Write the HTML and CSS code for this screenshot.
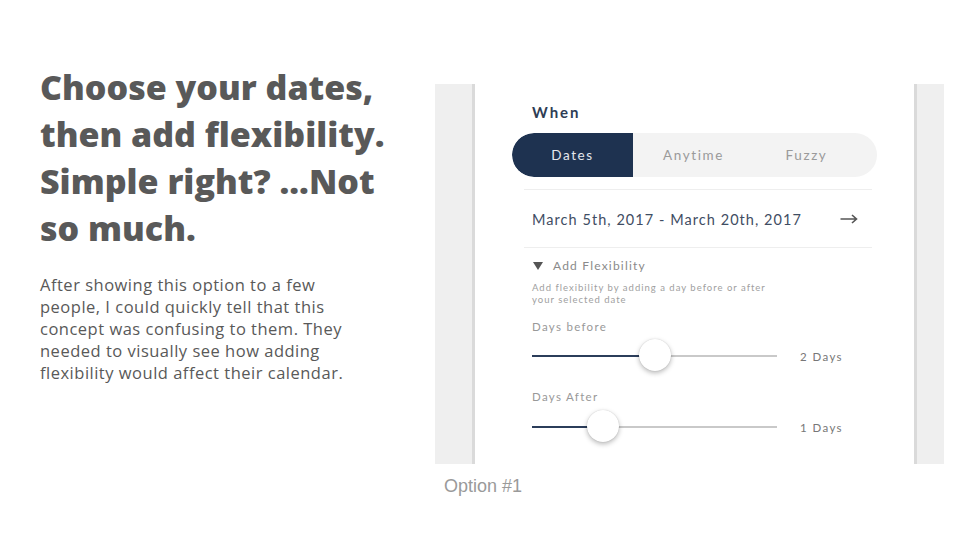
FILE: index.html
```html
<!DOCTYPE html>
<html>
<head>
<meta charset="utf-8">
<link rel="stylesheet" href="styles.css">
</head>
<body>
<div class="slide">
  <div class="left">
    <h1 class="title">Choose your dates,<br>then add flexibility.<br>Simple right? ...Not<br>so much.</h1>
    <p class="body">After showing this option to a few<br>people, I could quickly tell that this<br>concept was confusing to them. They<br>needed to visually see how adding<br>flexibility would affect their calendar.</p>
  </div>
  <div class="right">
    <div class="shot">
      <div class="strip strip-left"></div>
      <div class="screen">
        <div class="content">
          <div class="when">When</div>
          <div class="toggle">
            <div class="seg seg-active">Dates</div>
            <div class="seg">Anytime</div>
            <div class="seg seg-last">Fuzzy</div>
          </div>
          <div class="divider"></div>
          <div class="daterow">
            <span class="dates">March 5th, 2017 - March 20th, 2017</span>
            <svg class="arrow" width="18" height="10" viewBox="0 0 18 10"><path d="M0.5 5H16.5M12 1L16.5 5L12 9" fill="none" stroke="#555" stroke-width="1.6"/></svg>
          </div>
          <div class="divider divider2"></div>
          <div class="flexhead"><svg class="tri" width="10" height="8" viewBox="0 0 10 8"><path d="M0 0H10L5 8Z" fill="#555"/></svg>Add Flexibility</div>
          <div class="hint">Add flexibility by adding a day before or after<br>your selected date</div>
          <div class="label label1">Days before</div>
          <div class="sliderrow">
            <div class="track"><div class="fill" style="width:50%"></div><div class="thumb" style="left:50%"></div></div>
            <span class="val">2 Days</span>
          </div>
          <div class="label label2">Days After</div>
          <div class="sliderrow">
            <div class="track"><div class="fill" style="width:29%"></div><div class="thumb" style="left:29%"></div></div>
            <span class="val">1 Days</span>
          </div>
        </div>
      </div>
      <div class="strip strip-right"></div>
    </div>
    <div class="caption">Option #1</div>
  </div>
</div>
</body>
</html>
```

FILE: styles.css
```css
html, body {
  margin: 0;
  padding: 0;
  background: #ffffff;
}
.slide {
  width: 960px;
  height: 540px;
  display: flex;
  overflow: hidden;
}
.left {
  width: 395px;
  padding-left: 40px;
  padding-top: 64px;
  box-sizing: border-box;
  flex-shrink: 0;
}
.title {
  margin: 0;
  font-family: "Open Sans", sans-serif;
  font-weight: 800;
  font-size: 34px;
  line-height: 47px;
  color: #595959;
  white-space: nowrap;
}
.body {
  margin: 22px 0 0 0;
  font-family: "Open Sans", sans-serif;
  font-size: 16.5px;
  line-height: 22px;
  letter-spacing: 0.5px;
  color: #595959;
  white-space: nowrap;
}
.right {
  padding-left: 40px;
  padding-top: 84px;
}
.shot {
  width: 509px;
  height: 380px;
  display: flex;
  background: #efefef;
}
.strip {
  background: #efefef;
}
.strip-left {
  width: 37px;
  border-right: 3px solid #dadada;
}
.strip-right {
  width: 27px;
  border-left: 3px solid #dadada;
}
.screen {
  flex: 1;
  background: #ffffff;
  overflow: hidden;
}
.content {
  margin-left: 37px;
  width: 365px;
  padding-top: 18px;
  font-family: "Lato", sans-serif;
}
.when {
  padding-left: 20px;
  font-size: 15px;
  line-height: 20px;
  font-weight: 700;
  letter-spacing: 2px;
  color: #2e3d55;
}
.toggle {
  margin-top: 11px;
  height: 44px;
  display: flex;
  background: #f3f3f3;
  border-radius: 22px;
  overflow: hidden;
}
.seg {
  width: 121px;
  display: flex;
  align-items: center;
  justify-content: center;
  font-size: 13.5px;
  letter-spacing: 1.6px;
  color: #9a9a9a;
}
.seg-active {
  background: #1e3250;
  color: #e4e8ee;
  border-radius: 22px 0 0 22px;
}
.seg-last {
  width: 123px;
  padding-right: 18px;
  box-sizing: border-box;
}
.divider {
  margin: 12px 5px 0 12px;
  height: 1px;
  background: #eeeeee;
}
.daterow {
  margin-top: 14px;
  height: 30px;
  padding-left: 20px;
  padding-right: 19px;
  display: flex;
  align-items: center;
  justify-content: space-between;
}
.dates {
  font-size: 14.5px;
  letter-spacing: 1.05px;
  color: #3f4d63;
}
.divider2 {
  margin-top: 13px;
}
.flexhead {
  margin-top: 10px;
  padding-left: 21px;
  font-size: 12px;
  line-height: 16px;
  letter-spacing: 1.2px;
  color: #8a8a8a;
  display: flex;
  align-items: center;
}
.tri {
  margin-right: 10px;
}
.hint {
  margin-top: 8px;
  padding-left: 20px;
  font-size: 9.5px;
  line-height: 12px;
  letter-spacing: 1px;
  color: #a0a0a0;
}
.label {
  padding-left: 20px;
  font-size: 11.5px;
  line-height: 16px;
  letter-spacing: 1.3px;
  color: #999999;
}
.label1 {
  margin-top: 13px;
}
.label2 {
  margin-top: 17px;
}
.sliderrow {
  margin-top: 5px;
  height: 32px;
  padding-left: 20px;
  display: flex;
  align-items: center;
}
.label2 + .sliderrow {
  margin-top: 6px;
}
.track {
  position: relative;
  width: 245px;
  height: 2px;
  background: #c9c9c9;
}
.fill {
  height: 2px;
  background: #2b3d5a;
}
.thumb {
  position: absolute;
  top: -16px;
  width: 32px;
  height: 32px;
  margin-left: -16px;
  border-radius: 50%;
  background: #ffffff;
  box-shadow: 0 2px 5px rgba(0,0,0,0.28), 0 0 1px rgba(0,0,0,0.2);
}
.val {
  margin-left: 23px;
  font-size: 11.5px;
  letter-spacing: 1.4px;
  color: #777777;
}
.caption {
  margin-top: 11px;
  padding-left: 9px;
  font-family: "Liberation Sans", Arial, sans-serif;
  font-size: 18px;
  line-height: 22px;
  color: #9a9a9a;
}
```
